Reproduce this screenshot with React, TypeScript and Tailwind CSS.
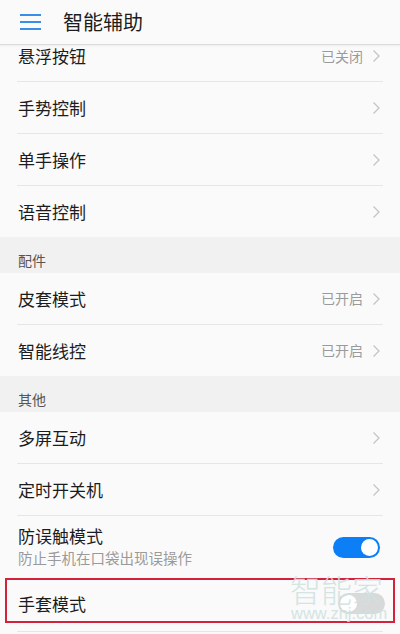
import React from "react";

interface RowProps {
  title: string;
  value?: string;
  first?: boolean;
  divider?: boolean;
}

const Chevron = () => (
  <svg width="9" height="14" viewBox="0 0 9 14" className="ml-[9px] shrink-0">
    <path d="M1.5 1.5 L7 7 L1.5 12.5" fill="none" stroke="#c4c4c4" strokeWidth="1.3" />
  </svg>
);

const Row = ({ title, value, first, divider = true }: RowProps) => (
  <div>
    <div
      className={
        first
          ? "flex h-[36px] items-center pb-[14px] pl-[18px] pr-[19px]"
          : "flex h-[51px] items-center pl-[18px] pr-[19px]"
      }
    >
      <span className="flex-1 text-[17px] text-[#1c1c1c]">{title}</span>
      {value && <span className="text-[14px] text-[#9a9a9a]">{value}</span>}
      <Chevron />
    </div>
    {divider && <div className="mx-[17px] h-px bg-[#e6e6e6]" />}
  </div>
);

const Section = ({ label }: { label: string }) => (
  <div className="h-[36px] bg-[#f1f1f1] pl-[18px] pt-[14px] text-[14px] leading-[18px] text-[#555]">
    {label}
  </div>
);

const App = () => {
  return (
    <div
      className="h-[634px] w-[400px] overflow-hidden bg-[#fafafa]"
      style={{ fontFamily: '"Noto Sans CJK SC", "Noto Sans", sans-serif' }}
    >
      <header className="flex h-[45px] items-center border-b border-[#dcdcdc] bg-[#fafafa] shadow-[0_1px_2px_rgba(0,0,0,0.06)]">
        <div className="ml-[20px] flex w-[21px] flex-col gap-[5px]">
          <span className="h-[2px] bg-[#3b8ee8]" />
          <span className="h-[2px] bg-[#3b8ee8]" />
          <span className="h-[2px] bg-[#3b8ee8]" />
        </div>
        <h1 className="ml-[22px] text-[20px] font-normal text-[#1c1c1c]">智能辅助</h1>
      </header>

      <Row title="悬浮按钮" value="已关闭" first />
      <Row title="手势控制" />
      <Row title="单手操作" />
      <Row title="语音控制" divider={false} />
      <Section label="配件" />
      <Row title="皮套模式" value="已开启" />
      <Row title="智能线控" value="已开启" divider={false} />
      <Section label="其他" />
      <Row title="多屏互动" />
      <Row title="定时开关机" />

      <div className="flex h-[62px] items-center pl-[18px] pr-[20px]">
        <div className="flex-1">
          <div className="text-[17px] leading-[22px] text-[#1c1c1c]">防误触模式</div>
          <div className="text-[14.5px] leading-[22px] text-[#9a9a9a]">防止手机在口袋出现误操作</div>
        </div>
        <div className="flex h-[21px] w-[47px] items-center justify-end rounded-full bg-[#0c7ff6] pr-[2px]">
          <span className="h-[17px] w-[17px] rounded-full bg-white" />
        </div>
      </div>

      <div className="relative">
        <div className="mx-[5px] flex h-[45px] items-center border-2 border-[#d3223c] pl-[11px] pr-[8px] pt-[6px]">
          <span className="flex-1 text-[17px] text-[#1c1c1c]">手套模式</span>
          <div className="flex h-[21px] w-[47px] items-center rounded-full bg-[#d9d9d9] pl-[2px]">
            <span className="h-[17px] w-[17px] rounded-full bg-white" />
          </div>
        </div>
        <div className="mx-[17px] mt-[8px] h-px bg-[#e6e6e6]" />
        <div className="pointer-events-none absolute left-[290px] top-[-5px] flex flex-col items-start leading-none text-[#cfe2e1] opacity-90">
          <span className="text-[31px] font-light">智能家</span>
          <span
            className="mt-[1px] pl-[1px] text-[16.5px]"
            style={{ fontFamily: '"Liberation Sans", sans-serif' }}
          >
            www.znj.com
          </span>
        </div>
      </div>
    </div>
  );
};

export default App;
